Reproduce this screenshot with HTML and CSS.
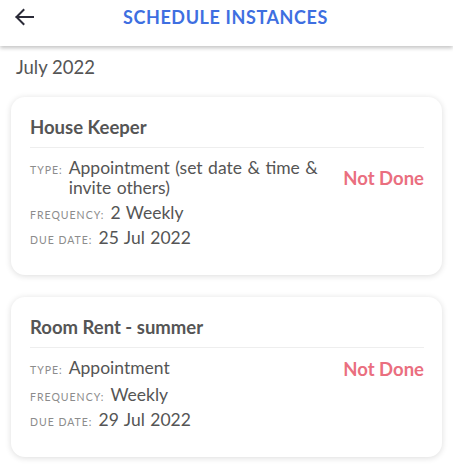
FILE: index.html
```html
<!DOCTYPE html>
<html lang="en">
<head>
<meta charset="UTF-8">
<meta name="viewport" content="width=device-width, initial-scale=1.0">
<title>Schedule Instances</title>
<link rel="stylesheet" href="styles.css">
</head>
<body>

<div class="header">
    <span class="back">
        <svg width="20" height="20" viewBox="0 0 20 20">
            <path d="M19 10H2.5M9.5 3L2.5 10L9.5 17" fill="none" stroke="#2b2b38" stroke-width="2" stroke-linecap="square"/>
        </svg>
    </span>
    <h1 class="title">SCHEDULE INSTANCES</h1>
</div>

<div class="month">July 2022</div>

<div class="card">
    <h3 class="card-title">House Keeper</h3>
    <div class="info">
        <div class="row">
            <span class="label">Type:</span>
            <span class="value">Appointment (set date &amp; time &amp; invite others)</span>
            <span class="status">Not Done</span>
        </div>
        <div class="row">
            <span class="label">Frequency:</span>
            <span class="value">2 Weekly</span>
        </div>
        <div class="row">
            <span class="label">Due Date:</span>
            <span class="value">25 Jul 2022</span>
        </div>
    </div>
</div>

<div class="card">
    <h3 class="card-title">Room Rent - summer</h3>
    <div class="info">
        <div class="row">
            <span class="label">Type:</span>
            <span class="value">Appointment</span>
            <span class="status">Not Done</span>
        </div>
        <div class="row">
            <span class="label">Frequency:</span>
            <span class="value">Weekly</span>
        </div>
        <div class="row">
            <span class="label">Due Date:</span>
            <span class="value">29 Jul 2022</span>
        </div>
    </div>
</div>

</body>
</html>
```

FILE: styles.css
```css
body {
    margin: 0;
    font-family: Lato, "Noto Sans", sans-serif;
    background-color: #fff;
    color: #555;
}
.header {
    display: flex;
    align-items: center;
    height: 33px;
    padding: 0 14px 13px;
    position: relative;
    background-color: #fff;
    box-shadow: 0 2px 4px rgba(0, 0, 0, 0.24);
}
.back {
    display: flex;
    width: 20px;
    height: 20px;
}
.title {
    flex: 1;
    margin: 0 22px 0 0;
    text-align: center;
    font-size: 18px;
    letter-spacing: 0.6px;
    font-weight: 700;
    color: #3e6fe1;
}
.month {
    margin: 10px 16px 19px;
    font-size: 18.5px;
    line-height: 22px;
}
.card {
    margin: 0 11px 22px;
    padding: 19px 18px 27px 19px;
    border-radius: 14px;
    background-color: #fff;
    box-shadow: 0 1px 6px rgba(0, 0, 0, 0.14);
}
.card-title {
    margin: 0;
    padding-bottom: 9px;
    border-bottom: 1px solid #eee;
    font-size: 18.5px;
    line-height: 22px;
    font-weight: 700;
}
.info {
    margin-top: 10px;
}
.row {
    display: flex;
    align-items: baseline;
    margin-top: 5px;
}
.row:first-child {
    margin-top: 0;
}
.label {
    margin-right: 6px;
    font-size: 10.5px;
    letter-spacing: 1px;
    text-transform: uppercase;
    color: #8c8c8c;
    white-space: nowrap;
}
.value {
    font-size: 17.5px;
    line-height: 20px;
    word-spacing: 1px;
}
.status {
    margin-left: auto;
    padding-left: 24px;
    align-self: center;
    font-size: 18.5px;
    font-weight: 700;
    color: #ea6f7f;
    white-space: nowrap;
}
```
